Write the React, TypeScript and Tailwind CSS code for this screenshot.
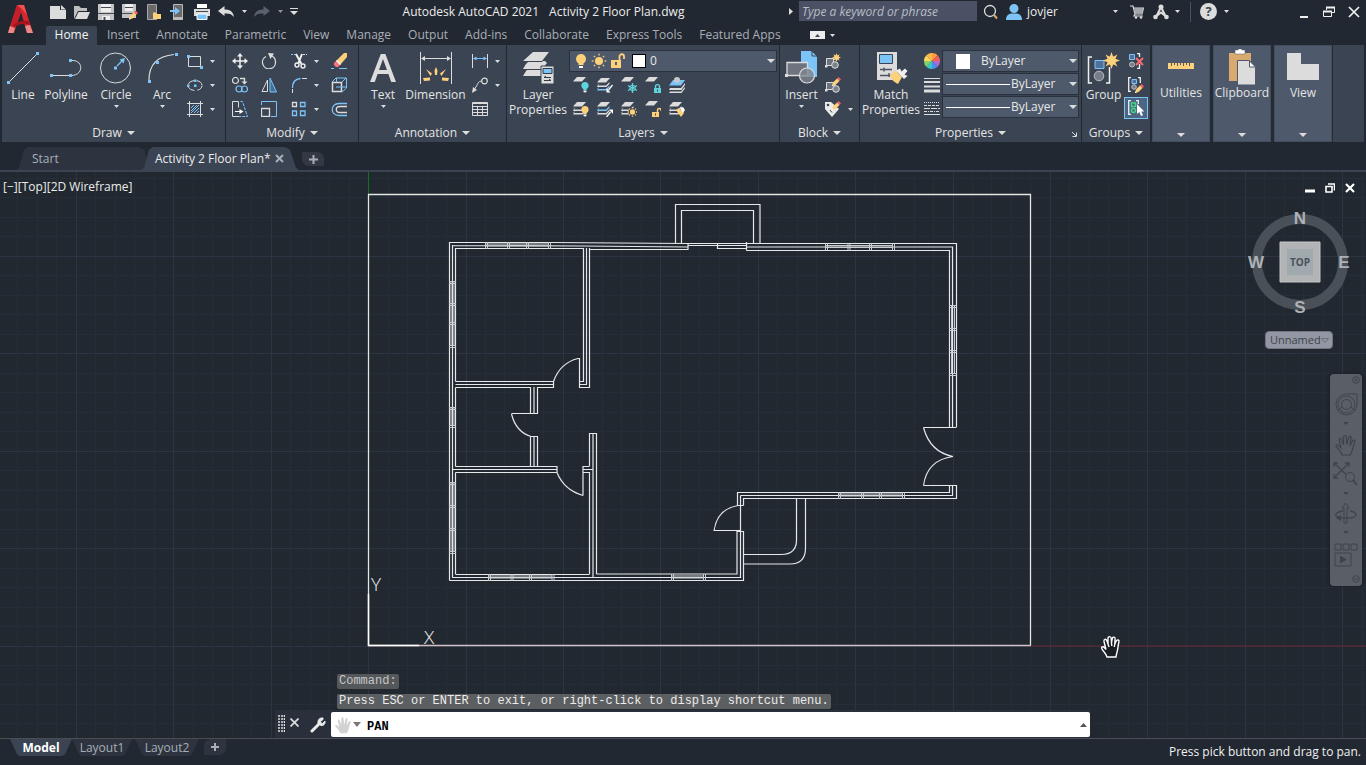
import React from "react";

const W = "#dcdcdc";
const B = "#7cc4f8";
const Y = "#fdd07a";

type SvgProps = { w?: number; h?: number; vb?: string; className?: string; children: React.ReactNode };

function Svg({ w = 16, h = 16, vb, className = "", children }: SvgProps) {
  return (
    <svg width={w} height={h} viewBox={vb ?? `0 0 ${w} ${h}`} fill="none" aria-hidden="true" className={`shrink-0 ${className}`}>
      {children}
    </svg>
  );
}

function Caret({ big = false, className = "" }: { big?: boolean; className?: string }) {
  return big ? (
    <Svg w={8} h={4} className={className}><path d="M0 0h8L4 4z" fill={W} /></Svg>
  ) : (
    <Svg w={5} h={3} className={className}><path d="M0 0h5L2.500 3z" fill={W} /></Svg>
  );
}

/* ---------- Shared icon parts ---------- */

const Pencil = ({ x = 0, y = 0 }: { x?: number; y?: number }) => (
  <g transform={`translate(${x} ${y})`}>
    <path d="M0 9l1-3.500L5 1.600l2.500 2.500L3.500 8z" fill={Y} />
    <path d="M5 1.600L6.600 0l2.500 2.500-1.600 1.600z" fill="#f4606a" />
    <path d="M0 9l.5-1.800L1.800 8.500z" fill="#fff" />
  </g>
);

const Sheet = ({ y = 0, c = W }: { y?: number; c?: string }) => <path d={`M4 ${y}h9l-4 4.500H0z`} fill={c} />;

const Stack = ({ mid = W, low = W }: { mid?: string; low?: string }) => (
  <g>
    <Sheet y={1} />
    <path d="M2.500 6L0 8.500h9L12.500 5v1.800L9.500 10H0" fill={mid} />
    <path d="M2.500 9.500L0 12h9l3.500-3.500v1.800L9.500 13.500H0" fill={low} />
  </g>
);

const Burst = ({ x, y, r }: { x: number; y: number; r: number }) => (
  <g transform={`translate(${x} ${y}) scale(${r})`} fill={Y}>
    <path d="M0-1L.2-.45.7-.7.45-.2 1 0 .45.200.7.700.2.450 0 1-.2.450-.7.700-.45.200-1 0-.45-.2-.7-.7-.2-.45z" />
    <circle r=".5" />
  </g>
);

const Sun = ({ x, y, r }: { x: number; y: number; r: number }) => (
  <g stroke={Y} strokeWidth="1.300">
    <circle cx={x} cy={y} r={r * 0.55} fill={Y} stroke="none" />
    {[0, 45, 90, 135, 180, 225, 270, 315].map((a) => (
      <path key={a} d={`M${x} ${y - r * 0.75}V${y - r}`} transform={`rotate(${a} ${x} ${y})`} />
    ))}
  </g>
);

const Lock = ({ x, y, c, open = false }: { x: number; y: number; c: string; open?: boolean }) => (
  <g transform={`translate(${x} ${y})`}>
    <path d="M0 4h7v5H0z" fill={c} />
    <path d={open ? "M5.500 4V2c0-2 3.500-2 3.500 0v1" : "M1.500 4V2.500c0-2.500 4-2.500 4 0V4"} stroke={c} strokeWidth="1.400" />
    <path d="M3 5.500h1v2H3z" fill="#3b4453" />
  </g>
);

const Bulb = ({ x, y, c }: { x: number; y: number; c: string }) => (
  <g transform={`translate(${x} ${y})`}>
    <circle cx="4" cy="4" r="3.600" fill={c} />
    <path d="M2.300 6h3.400v2.500H2.300z" fill={c} />
    <path d="M2.500 9h3v1.500L4 11l-1.500-.5z" fill="#fff" />
  </g>
);

const HandShape = () => (
  <path
    d="M7 21C6 17 3 15 1.200 12.600c-.9-1.400.8-2.300 2-1.200L6 13.800 4.200 6c-.4-1.900 1.800-2.400 2.400-.6l1.900 5.500L8.500 3c0-2 2.500-2 2.700 0l.7 7.600 1.800-7c.5-1.900 2.700-1.400 2.400.5L15 11.600l2.600-4.700c.9-1.600 2.800-.7 2.200.9-1.300 3.800-1.900 5.500-2.500 8-.5 2.200-1.300 3.700-2 5.200z"
  />
);

/* ---------- Large icons ---------- */

const big = {
  line: <Svg w={32} h={32}><path d="M3 29L29 3" stroke={W} /><path d="M0 29h3v3H0zM29 0h3v3h-3z" fill={B} /></Svg>,
  polyline: <Svg w={34} h={32}><path d="M3 23.500h18M22 8.500c13-1 13 15 0 15" stroke={W} /><path d="M1 22h3v3H1zM20 22h3v3h-3zM20 7h3v3h-3z" fill={B} /></Svg>,
  circle: <Svg w={32} h={32}><circle cx="15.500" cy="16" r="15" stroke={W} /><path d="M17 14l6-6" stroke={B} strokeWidth="1.200" /><path d="M25 6l-1.500 5.500L19.500 7.500z" fill={B} /><path d="M14 14.500h3v3h-3z" fill={B} /></Svg>,
  arc: <Svg w={32} h={32}><path d="M3 28C3 12 12 4 28 2.500" stroke={W} strokeWidth="1.200" /><path d="M2 28h3v3H2zM10 9h3v3h-3zM29 1h3v3h-3z" fill={B} /></Svg>,
  text: <Svg w={26} h={32}><path fill={W} fillRule="evenodd" d="M0 30L10.800 2h4.600L26 30h-4.800l-2.800-8H7.600l-2.800 8zM9 18h8L13 7z" /></Svg>,
  dimension: (
    <Svg w={34} h={32}>
      <path d="M1.500 0v32M32.500 0v32M3 6.500h28" stroke={W} />
      <path d="M2 6.500l4-2.500v5zM32 6.500L28 4v5z" fill={W} />
      <path d="M17 15l1.500 3.500L18 23h-2l-.5-4.500zM7 17l6 4.500-1.500 2.500zM27 17l-6 4.500 1.500 2.500zM4 26l7-.5v3L5 29zM30 26l-7-.5v3l6 .5z" fill={Y} />
    </Svg>
  ),
  layerProps: (
    <Svg w={34} h={32}>
      <path d="M12 0h16l-7 9H2zM5 12l3-3h16l2 2-5 6H2zM5 19l2-2h14v7H2z" fill={W} />
      <path d="M2 9.500h19.500M2 17.500h19" stroke="#3b4453" />
      <path d="M20 14h13v18H20z" fill={W} stroke="#3b4453" />
      <path d="M22 16.500h9v5h-9z" fill={B} stroke="#333b47" />
      <path d="M23 25.500h7M23 28.500h7M25 24l-2 1.500M28 27l2 1.500" stroke="#333b47" />
    </Svg>
  ),
  insert: (
    <Svg w={34} h={34} className="-mt-px">
      <path d="M16 0h10l6 6v20H16z" fill={B} /><path d="M27 0l5 5h-5z" fill={B} stroke="#3b4453" />
      <path d="M2 11.500h20.500V24.500H2z" fill="#6d737f" stroke={W} strokeWidth="1.300" />
      <circle cx="22" cy="24.500" r="7.500" fill="#80868f" fillOpacity=".8" stroke={W} strokeWidth="1.200" />
      <path d="M0 23h3v3H0z" fill={W} />
    </Svg>
  ),
  match: (
    <Svg w={34} h={32}>
      <path d="M3 0h20v28H3z" fill={W} /><path d="M5.500 2.500h13v9h-13z" fill={B} stroke="#3b4453" />
      <path d="M6 17.500h12M6 23.500h12M10 15.500v4M15 21v4" stroke="#4c5462" strokeWidth="1.400" />
      <path d="M16 23l6-4.500 6 6.500-4 7c-4-2-8-5-8-9z" fill={Y} /><path d="M22 18.500l4-2 1.500 3 3.500-3 2.500 2.500-3 3.500 3 1.500-3.500 3z" fill="#efefef" />
    </Svg>
  ),
  group: (
    <Svg w={34} h={32}>
      <path d="M5 5H1.500v26H5M19 31h3.500V15" stroke="#efefef" strokeWidth="1.500" />
      <path d="M8 8.500h9v8H8z" fill="#50729a" stroke={B} /><circle cx="12" cy="24" r="4.800" fill="#787e89" stroke="#b9bcc2" />
      <Burst x={24.500} y={8.500} r={8.500} />
    </Svg>
  ),
  ruler: <Svg w={30} h={32}><path d="M2 12h26v6H2z" fill={Y} /><path d="M5.500 12v3M8.500 12v2M11.500 12v3M14.500 12v2M17.500 12v3M20.500 12v2M23.500 12v3" stroke="#4e596b" /></Svg>,
  clipboard: <Svg w={28} h={37}><path d="M1 4h22v28H1z" fill="#d8aa70" /><path d="M7 1h3V0h4v1h3v4H7z" fill="#fff" stroke="#4e596b" strokeWidth=".5" /><path d="M9.500 11.500h12l6 6V36h-18z" fill={W} stroke="#4e596b" /><path d="M21.500 12v6h6z" fill="#fff" stroke="#4e596b" /></Svg>,
  view: <Svg w={32} h={28}><path d="M0 0h14v11h18v16H0z" fill={W} /></Svg>,
};

/* ---------- Small icons ---------- */

const small = {
  rect: <Svg><path d="M1.500 3.500h12v10h-12z" stroke={W} /><path d="M0 2h3v3H0zM13 13h3v3h-3z" fill={B} /></Svg>,
  ellipse: <Svg><ellipse cx="8" cy="8.500" rx="7" ry="5" stroke={W} strokeDasharray="7 3" /><path d="M7 2.500h2.500V5H7zM7 7.500h2.500V10H7zM0 7.500h2.500V10H0z" fill={B} /></Svg>,
  hatch: <Svg><path d="M2.500 0v16M13.500 0v16M0 2.500h16M0 13.500h16" stroke={W} /><path d="M4 7l3-3M4 10l6-6M4 12l8-8M7 12l5-5M10 12l2-2" stroke={B} /></Svg>,
  move: <Svg><path d="M8 2v12M2 8h12" stroke="#efefef" strokeWidth="1.500" /><path d="M8 0l3 3.500H5zM8 16l3-3.500H5zM0 8l3.500-3v6zM16 8l-3.500-3v6z" fill="#efefef" /></Svg>,
  rotate: <Svg><path d="M5 3.500A6.500 6.500 0 1 0 14.500 9c0-3-1.500-5-3.500-6" stroke={W} strokeWidth="1.300" /><path d="M7 0l6 .5L9.500 6z" fill={W} /></Svg>,
  trim: <Svg><path d="M0 1.500h5" stroke={B} strokeDasharray="2 1" /><path d="M12 1.500h4" stroke={W} strokeDasharray="2 1" /><path d="M5 1l5.500 10M11 1L7 11" stroke="#efefef" strokeWidth="2" /><circle cx="6" cy="12" r="2" stroke="#efefef" strokeWidth="1.400" /><circle cx="12" cy="13" r="2" stroke="#efefef" strokeWidth="1.400" /></Svg>,
  erase: <Svg><path d="M5 8L13 0h3v4l-7 8z" fill={Y} /><path d="M3 10l2.500-2.500 4 4L7 14c-2 1-5-2-4-4z" fill="#f4747a" /><path d="M5 8l4 4 1-1-4-4z" fill="#fff" /><path d="M0 15.500h3M8 15.500h8" stroke={B} /></Svg>,
  copy: <Svg><circle cx="3.500" cy="3.500" r="3" stroke={W} strokeWidth="1.200" /><circle cx="7" cy="12" r="3" stroke={B} strokeWidth="1.200" /><circle cx="12.500" cy="12" r="3" stroke={B} strokeWidth="1.200" /><path d="M8 1.500h4.500V5" stroke={W} strokeWidth="1.400" /><path d="M9.500 4.500h6L12.500 7.500z" fill={W} /></Svg>,
  mirror: <Svg><path d="M6.500 3v11.500H1z" stroke={W} /><path d="M9 1v14h6.500z" fill="#3f7099" stroke={B} /></Svg>,
  fillet: <Svg><path d="M1.500 11c0-6 3-9 8-9.500" stroke={B} strokeWidth="1.300" /><path d="M11 1.500h5M1.500 12v4" stroke={W} /></Svg>,
  box: <Svg><path d="M1.500 5.500h9v9h-9z" stroke={W} strokeWidth="1.500" /><path d="M1 5l4-4h10.500v10L11 15M11 5l4-4M5.500 1v4M5 10h10" stroke={B} /></Svg>,
  stretch: <Svg><path d="M7 15.500H.5V.5h6v6" stroke={W} /><path d="M8.500.5h2L15.500 15.500H7" stroke={B} strokeDasharray="3 1" /><path d="M3 10.500h6" stroke="#fff" /><path d="M7.500 8l4 2.500-4 2.500z" fill="#fff" /></Svg>,
  scale: <Svg><path d="M.5 4V.5h15v15H10" stroke={B} /><path d="M.5 7.500h8v8h-8z" stroke={W} strokeWidth="1.300" /></Svg>,
  array: <Svg><path d="M1.500 1.500h4v4h-4z" stroke={W} strokeWidth="1.300" /><path d="M9.500 1.500h4.500v4H9.500zM1.500 10h4v4.500h-4zM9.500 10h4.500v4.500H9.500z" stroke={B} strokeWidth="1.300" /></Svg>,
  offset: <Svg><path d="M16 2.500H8c-9 0-9 12 0 12h8" stroke={B} strokeWidth="1.300" /><path d="M16 5.500H9c-5 0-5 6 0 6h7" stroke={W} strokeWidth="1.300" /></Svg>,
  linear: <Svg><path d="M.5 1v14M15.500 1v14" stroke={W} /><path d="M3 5.500h10" stroke={B} /><path d="M1 5.500l3.500-2v4zM15 5.500l-3.500-2v4z" fill={B} /></Svg>,
  leader: <Svg><circle cx="12.500" cy="4" r="2.800" stroke={W} strokeWidth="1.200" /><path d="M9.500 4C6 4 6 7 4.500 9L2 13" stroke={W} /><path d="M0 16l1-6 4 3z" fill={W} /></Svg>,
  table: <Svg><path d="M.5 1.500h15v13H.5zM1 2.500h14M1 5.500h14M1 8.500h14M1 11.500h14M5.500 5v10M10.500 5v10" stroke={W} /></Svg>,
  blockNew: <Svg><path d="M1.500 5.500h7v7h-7z" stroke={W} fill="#6d737f" /><circle cx="10" cy="12" r="3.300" fill="#7c828c" stroke={W} /><path d="M0 12h2.500v2.500H0z" fill={W} /><Burst x={11.500} y={4.500} r={4.500} /></Svg>,
  blockEdit: <Svg><path d="M1.500 5.500h8v7h-8z" stroke={W} fill="#6d737f" /><circle cx="11" cy="12" r="3.300" fill="#7c828c" stroke={W} /><path d="M0 12h2.500v2.500H0z" fill={W} /><Pencil x={7} /></Svg>,
  attribute: <Svg><path d="M0 1h6l8 7-7 8-7-8z" fill="#eaeaea" /><circle cx="3" cy="4" r="1.300" fill="#3b4453" /><path d="M5 9l2 2.500" stroke="#3b4453" /><Pencil x={7} /></Svg>,
  weights: <Svg><path d="M0 1.500h16" stroke={W} /><path d="M0 5h16M0 9.500h16" stroke={W} strokeWidth="2" /><path d="M0 14h16" stroke={W} strokeWidth="3" /></Svg>,
  linetypes: <Svg><path d="M0 1.500h16" stroke={W} strokeDasharray="1 1" /><path d="M0 4.500h16" stroke={W} strokeDasharray="3 1" /><path d="M0 7.500h16" stroke={W} strokeDasharray="6 1" /><path d="M0 10.500h16" stroke={W} strokeDasharray="3 1 1 1" /><path d="M0 13.500h16" stroke={W} /></Svg>,
  ungroup: <Svg><path d="M1.500 1.500h5v5h-5z" fill="#50729a" stroke={B} /><circle cx="4" cy="11.500" r="2.500" fill="#787e89" stroke="#b9bcc2" /><path d="M9 .7h2.500V4M11.500 11v4.300H9" stroke="#efefef" strokeWidth="1.300" /><path d="M8 5l7 7M15 5l-7 7" stroke="#ff6b70" strokeWidth="1.900" /></Svg>,
  groupEdit: <Svg><path d="M3 .7H.7v13.600H3M10 .7h2.300V6" stroke="#efefef" strokeWidth="1.300" /><path d="M4 2.500h4.500v4H4z" fill="#50729a" stroke={B} /><circle cx="6" cy="10" r="2.300" fill="#787e89" stroke="#b9bcc2" /><Pencil x={7} y={7} /></Svg>,
  groupSelect: <Svg><path d="M3 .7H.7v13.600H3M8 .7h2.300V4" stroke="#efefef" strokeWidth="1.300" /><path d="M3.500 3h4v3.500h-4z" stroke="#46d38a" strokeWidth="1.500" /><circle cx="5.500" cy="10.500" r="2" stroke="#46d38a" strokeWidth="1.500" /><path d="M9 4v10l2.300-2 1.700 4 2-.8-1.700-3.700h3z" fill="#fff" /></Svg>,
  wheel: (
    <Svg>
      {["#ff9b3c", "#ef6159", "#b56ad0", "#4b8df0", "#3cc8c0", "#7ed36b", "#ffd85a", "#ffb947"].map((c, i) => (
        <path key={c} d="M8 8V0A8 8 0 0 1 13.700 2.300z" fill={c} transform={`rotate(${i * 45} 8 8)`} />
      ))}
    </Svg>
  ),
};

const layerTools: [string, React.ReactNode][] = [
  ["Layer off", <Svg key="a"><Sheet y={0} /><Bulb x={8} y={4.500} c="#5fd4dc" /></Svg>],
  ["Layer isolate", <Svg key="b"><Stack low={B} /><path d="M15.500 8l-4 5" stroke="#fff" strokeWidth="1.300" /><path d="M9.500 15.500V11l4 4.500z" fill="#fff" /></Svg>],
  ["Layer freeze", <Svg key="c"><Sheet y={0} /><path d="M11.500 6v10M7 8.500l9 5M7 13.500l9-5" stroke="#5fd4dc" strokeWidth="1.300" /><circle cx="11.500" cy="11" r="2.800" stroke="#5fd4dc" /></Svg>],
  ["Layer lock", <Svg key="d"><Sheet y={0} /><Lock x={9} y={7} c="#5fd4dc" /></Svg>],
  ["Make current", <Svg key="e"><path d="M4 3h12l-4 5.500H0z" fill={B} /><path d="M1 11h11l4-5v2l-3.500 5H0zM1 14.500h11l4-4.500v1.500L12.500 16H0z" fill={W} /><circle cx="8" cy="3" r="3" fill="#c9c9c9" /></Svg>],
  ["Turn all on", <Svg key="f"><Stack /><Bulb x={8} y={4.500} c={Y} /></Svg>],
  ["Unisolate", <Svg key="g"><Stack mid={B} /><path d="M9.500 16l4-5" stroke="#fff" strokeWidth="1.300" /><path d="M16 8.500V13l-4-4.500z" fill="#fff" /></Svg>],
  ["Thaw all", <Svg key="h"><Stack /><circle cx="11.500" cy="11" r="4" fill="#3b4453" /><Sun x={11.500} y={11} r={4.800} /></Svg>],
  ["Unlock", <Svg key="i"><Sheet y={0} /><Lock x={7} y={7} c={Y} open /></Svg>],
  ["Match layer", <Svg key="j"><Stack /><path d="M7 9l3-2 5 5-3 4z" fill={Y} /><path d="M11 7l3-1 2 3-2 3z" fill="#fff" /></Svg>],
];

/* ---------- Ribbon building blocks ---------- */

function BigButton({ icon, label, caret, className }: { icon: React.ReactNode; label: React.ReactNode; caret?: boolean; className: string }) {
  return (
    <button type="button" className={`flex shrink-0 flex-col items-center pt-[7px] text-[12px] leading-[15px] text-[#e4e4e4] ${className}`}>
      <span className="flex h-[35px] items-start justify-center">{icon}</span>
      <span className="whitespace-nowrap text-center">{label}</span>
      {caret && <Caret className="mt-[3px]" />}
    </button>
  );
}

function Tool({ label, icon, caret }: { label: string; icon: React.ReactNode; caret?: boolean }) {
  return (
    <button type="button" aria-label={label} className="flex h-[24px] items-center gap-[7px]">
      {icon}
      {caret && <Caret />}
    </button>
  );
}

function Panel({ title, className, launcher, children }: { title: string; className: string; launcher?: boolean; children: React.ReactNode }) {
  return (
    <section className={`flex shrink-0 flex-col bg-[#3b4453] ${className}`}>
      <div className="flex h-[79px]">{children}</div>
      <button type="button" className="relative flex h-[18px] items-center justify-center gap-[5px] text-[12px] leading-[18px] text-[#e4e4e4]">
        {title}
        <Caret big />
        {launcher && (
          <Svg w={6} h={6} className="absolute right-[4px] bottom-[5px]"><path d="M1 1l4 4M5.500 1.500v4h-4" stroke={W} /></Svg>
        )}
      </button>
    </section>
  );
}

function CollapsedPanel({ title, icon }: { title: string; icon: React.ReactNode }) {
  return (
    <button type="button" className="flex w-[58px] shrink-0 flex-col items-center border border-[#424d5e] bg-[#4e596b] text-[12px] leading-[15px] text-[#e4e4e4]">
      <span className="flex h-[39px] items-center pt-[3px]">{icon}</span>
      <span>{title}</span>
      <Caret big className="mt-auto mb-[4px]" />
    </button>
  );
}

function PropertySelect({ label, kind }: { label: string; kind: "swatch" | "line" }) {
  return (
    <div className="flex h-[22px] items-center border border-[#2a313c] bg-[#4e596b] pr-px">
      {kind === "swatch" ? <span className="mr-[11px] ml-[13px] h-[15px] w-[14px] bg-white" /> : <span className="mr-px ml-[3px] h-px w-[64px] bg-white" />}
      <select aria-label={label} className="min-w-0 flex-1 appearance-none bg-transparent text-[12px] leading-[18px] text-[#e8e8e8] outline-none">
        <option>ByLayer</option>
      </select>
      <Caret big className="pointer-events-none" />
    </div>
  );
}

function Ribbon() {
  return (
    <div className="flex h-[97px] shrink-0 gap-px px-[2px]">
      <Panel title="Draw" className="w-[223px]">
        <BigButton className="ml-[3px] w-[36px]" icon={big.line} label="Line" />
        <BigButton className="w-[50px]" icon={big.polyline} label="Polyline" />
        <BigButton className="w-[50px]" icon={big.circle} label="Circle" caret />
        <BigButton className="w-[42px]" icon={big.arc} label="Arc" caret />
        <div className="ml-[4px] flex flex-col pt-[4px]">
          <Tool label="Rectangle" icon={small.rect} caret />
          <Tool label="Ellipse" icon={small.ellipse} caret />
          <Tool label="Hatch" icon={small.hatch} caret />
        </div>
      </Panel>

      <Panel title="Modify" className="w-[132px]">
        <div className="ml-[6px] grid auto-rows-[24px] grid-cols-[29px_30px_40px_16px] pt-[4px]">
          <Tool label="Move" icon={small.move} />
          <Tool label="Rotate" icon={small.rotate} />
          <Tool label="Trim" icon={small.trim} caret />
          <Tool label="Erase" icon={small.erase} />
          <Tool label="Copy" icon={small.copy} />
          <Tool label="Mirror" icon={small.mirror} />
          <Tool label="Fillet" icon={small.fillet} caret />
          <Tool label="Explode" icon={small.box} />
          <Tool label="Stretch" icon={small.stretch} />
          <Tool label="Scale" icon={small.scale} />
          <Tool label="Array" icon={small.array} caret />
          <Tool label="Offset" icon={small.offset} />
        </div>
      </Panel>

      <Panel title="Annotation" className="w-[147px]">
        <BigButton className="ml-[2px] w-[44px]" icon={big.text} label="Text" caret />
        <BigButton className="w-[61px]" icon={big.dimension} label="Dimension" />
        <div className="ml-[6px] flex flex-col pt-[4px]">
          <Tool label="Linear" icon={small.linear} caret />
          <Tool label="Leader" icon={small.leader} caret />
          <Tool label="Table" icon={small.table} />
        </div>
      </Panel>

      <Panel title="Layers" className="w-[272px]">
        <BigButton className="ml-[3px] w-[56px]" icon={big.layerProps} label={<>Layer<br />Properties</>} />
        <div className="ml-[3px] flex flex-1 flex-col pt-[5px] pr-[2px]">
          <div className="flex h-[22px] items-center border border-[#2a313c] bg-[#4e596b] pr-[1px] pl-[5px]">
            <Svg w={12} h={16}><circle cx="6" cy="6" r="5" fill={Y} /><path d="M3.500 9h5v3h-5z" fill={Y} /><path d="M4 13h4v2H4z" fill="#fff" /></Svg>
            <Svg w={16} h={16} className="ml-[4px]"><Sun x={8} y={8} r={7.300} /></Svg>
            <Svg w={14} h={16} className="ml-[4px]"><path d="M0 7h10v8H0z" fill={Y} /><path d="M8.500 7V3.500c0-3 4.500-3 4.500 0V6" stroke={Y} strokeWidth="1.800" /><path d="M4 9h2v3H4z" fill="#4e596b" /></Svg>
            <span className="ml-[7px] h-[14px] w-[14px] border border-black bg-white" />
            <select aria-label="Current layer" className="ml-[4px] min-w-0 flex-1 appearance-none bg-transparent text-[12px] leading-[18px] text-[#e8e8e8] outline-none">
              <option>0</option>
            </select>
            <Caret big className="pointer-events-none" />
          </div>
          <div className="ml-[4px] grid w-[120px] auto-rows-[24px] grid-cols-5 pt-px">
            {layerTools.map(([name, icon]) => <Tool key={name} label={name} icon={icon} />)}
          </div>
        </div>
      </Panel>

      <Panel title="Block" className="w-[79px]">
        <BigButton className="ml-[1px] w-[41px]" icon={big.insert} label="Insert" caret />
        <div className="ml-[3px] flex flex-col pt-[4px]">
          <Tool label="Create block" icon={small.blockNew} />
          <Tool label="Edit block" icon={small.blockEdit} />
          <Tool label="Edit attributes" icon={small.attribute} caret />
        </div>
      </Panel>

      <Panel title="Properties" className="w-[221px]" launcher>
        <BigButton className="ml-[3px] w-[56px]" icon={big.match} label={<>Match<br />Properties</>} />
        <div className="ml-[5px] flex flex-col pt-[4px]">
          <Tool label="Object color" icon={small.wheel} />
          <Tool label="Lineweight" icon={small.weights} />
          <Tool label="Linetype" icon={small.linetypes} />
        </div>
        <div className="ml-[2px] flex flex-1 flex-col gap-px pt-[5px] pr-[2px]">
          <PropertySelect label="Color" kind="swatch" />
          <PropertySelect label="Lineweight" kind="line" />
          <PropertySelect label="Linetype" kind="line" />
        </div>
      </Panel>

      <Panel title="Groups" className="w-[68px]">
        <BigButton className="ml-[2px] w-[39px]" icon={big.group} label="Group" />
        <div className="ml-[1px] flex flex-col items-center pt-[4px]">
          <Tool label="Ungroup" icon={small.ungroup} />
          <Tool label="Edit group" icon={small.groupEdit} />
          <button type="button" aria-label="Group selection" aria-pressed="true" className="flex h-[22px] w-[24px] items-center justify-center border border-[#7cc4f8] bg-[#4c6583]">
            {small.groupSelect}
          </button>
        </div>
      </Panel>

      <div className="flex min-w-0 flex-1 gap-[3px] bg-[#252b35] pl-px">
        <CollapsedPanel title="Utilities" icon={big.ruler} />
        <CollapsedPanel title="Clipboard" icon={big.clipboard} />
        <CollapsedPanel title="View" icon={big.view} />
        <div className="-ml-[2px] flex-1 bg-[#3b4453]" />
      </div>
    </div>
  );
}

/* ---------- Title bar and tabs ---------- */

const quickTools: [string, React.ReactNode][] = [
  ["New", <Svg key="n"><path d="M0 2h10v4h6v9H0z" fill={W} /><path d="M11 1l5 4.500h-5z" fill={W} /></Svg>],
  ["Open", <Svg key="o"><path d="M0 15V2h5l2 2h6v3H4z" fill="#bfbfbf" /><path d="M4.500 8H16l-3 7H1z" fill={W} /></Svg>],
  ["Save", <Svg key="s"><path d="M0 0h16v16H0z" fill="#c4c4c4" /><path d="M3 0h10v8H3z" fill="#eee" /><path d="M3 3.500h10M0 9.500h16" stroke="#444b57" /><path d="M4 12h8v4H4z" fill="#eee" /><path d="M5.500 13h2v3h-2z" fill="#444b57" /></Svg>],
  ["Save As", <Svg key="sa"><path d="M0 0h14v14H0z" fill="#c4c4c4" /><path d="M3 0h8v7H3z" fill="#eee" /><path d="M3 3.500h8M0 9.500h14" stroke="#444b57" /><Pencil x={7} y={6.500} /></Svg>],
  ["Open from Mobile", <Svg key="om"><path d="M1.500.5h9v15h-9z" fill="#6a6a6a" stroke="#aaa" /><path d="M7 15V8.500h3L11 10h4v5z" fill={Y} /></Svg>],
  ["Save to Mobile", <Svg key="sm"><path d="M3.500.5h9v15h-9z" fill="#6a6a6a" stroke="#bbb" /><path d="M3 13h10v3H3z" fill="#bbb" /><path d="M0 6h5V3l5 4-5 4V8H0z" fill={B} /></Svg>],
  ["Plot", <Svg key="p"><path d="M3 0h10v4H3z" fill="#fff" /><path d="M0 5h16v7H0z" fill={W} /><path d="M2 7.500h12" stroke="#444b57" /><path d="M3 10h10v5.500H3z" fill={B} stroke="#fff" /></Svg>],
];

const Arrow = ({ flip = false }: { flip?: boolean }) => (
  <Svg className={flip ? "-scale-x-100" : ""}>
    <path d="M0 7l6.500-5v3.500C12 5 15.500 8 16 13c-2.500-3-5-4-9.500-3.500V12z" fill={flip ? "#59616d" : W} />
  </Svg>
);

function TitleBar() {
  return (
    <div className="flex h-[24px] items-center pb-px text-[12px] text-[#ececec]">
      {quickTools.map(([name, icon]) => (
        <button key={name} type="button" aria-label={name} className="flex h-[22px] w-[24px] shrink-0 items-center justify-center">{icon}</button>
      ))}
      <button type="button" aria-label="Undo" className="flex h-[22px] w-[24px] shrink-0 items-center justify-center"><Arrow /></button>
      <button type="button" aria-label="Undo list" className="flex w-[12px] shrink-0 justify-center"><Caret /></button>
      <button type="button" aria-label="Redo" className="flex h-[22px] w-[24px] shrink-0 items-center justify-center"><Arrow flip /></button>
      <button type="button" aria-label="Redo list" className="flex w-[12px] shrink-0 justify-center opacity-60"><Caret /></button>
      <button type="button" aria-label="Customize" className="flex w-[16px] shrink-0 justify-center"><Svg w={8} h={7}><path d="M0 .5h8" stroke={W} /><path d="M0 3h8L4 7z" fill={W} /></Svg></button>
      <h1 className="flex flex-1 justify-center gap-[10px] whitespace-nowrap pr-[4px] font-normal">
        <span>Autodesk AutoCAD 2021</span>
        <span>Activity 2 Floor Plan.dwg</span>
      </h1>
      <Svg w={4} h={7} className="mr-[6px]"><path d="M0 0l4 3.500L0 7z" fill={W} /></Svg>
      <input aria-label="Search" placeholder="Type a keyword or phrase" className="mb-px h-[20px] w-[178px] shrink-0 bg-[#4a5164] px-[3px] text-[12px] italic outline-none placeholder:text-[#b9bdc6]" />
      <button type="button" aria-label="Find" className="flex w-[28px] shrink-0 justify-center"><Svg><circle cx="7" cy="7" r="5.500" stroke={W} strokeWidth="1.300" /><path d="M11 11l3 3.500" stroke="#d8aa70" strokeWidth="2" /></Svg></button>
      <button type="button" className="flex w-[113px] shrink-0 items-center gap-[5px] pl-px">
        <Svg w={16} h={16}><circle cx="8" cy="4.500" r="4.500" fill={B} /><path d="M0 16c0-5 3-6 5-6.500h6c2 .5 5 1.500 5 6.500z" fill={B} /></Svg>
        jovjer
        <Caret className="ml-auto" />
      </button>
      <button type="button" aria-label="App store" className="ml-[12px] shrink-0"><Svg w={14} h={14}><path d="M0 1h3l2 8h7l1.500-6H4M5 9l-1 2h9" stroke={W} strokeWidth="1.200" /><path d="M4 3h9.500L12 8.500H5z" fill="#a5a8ae" /><circle cx="6" cy="12.500" r="1.300" fill={W} /><circle cx="11" cy="12.500" r="1.300" fill={W} /></Svg></button>
      <button type="button" aria-label="Autodesk app" className="ml-[9px] flex shrink-0 items-center gap-[6px]"><Svg><path d="M8 3L3 13M8 3l5 10M3 12.500l5-4 5 4" stroke={W} strokeWidth="2" /><circle cx="8" cy="3" r="2.500" fill={W} /><circle cx="2.500" cy="13" r="2.300" fill={W} /><circle cx="13.500" cy="13" r="2.300" fill={W} /></Svg><Caret /></button>
      <span className="ml-[10px] h-[20px] w-px bg-[#4a5164]" />
      <button type="button" aria-label="Help" className="ml-[9px] flex shrink-0 items-center gap-[7px]"><span className="flex size-[17px] items-center justify-center rounded-full bg-[#dcdcdc] text-[13px] font-bold text-[#3b4453]">?</span><Caret /></button>
      <button type="button" aria-label="Minimize" className="ml-[70px] shrink-0"><Svg w={10} h={12}><path d="M1 11h8" stroke="#efefef" strokeWidth="2" /></Svg></button>
      <button type="button" aria-label="Restore" className="ml-[14px] shrink-0"><Svg w={12} h={12}><path d="M3.500 4V1.500h8v5H9M.5 5.500h8v5h-8z" stroke="#efefef" /><path d="M3 1.500h9M0 5.500h9" stroke="#efefef" strokeWidth="2" /></Svg></button>
      <button type="button" aria-label="Close" className="mr-[6px] ml-[13px] shrink-0"><Svg w={12} h={12}><path d="M1 1l10 10M11 1L1 11" stroke="#efefef" strokeWidth="1.700" /></Svg></button>
    </div>
  );
}

const ribbonTabs = ["Insert", "Annotate", "Parametric", "View", "Manage", "Output", "Add-ins", "Collaborate", "Express Tools", "Featured Apps"];

function Header() {
  return (
    <header className="flex h-[45px] shrink-0">
      <button type="button" aria-label="Application menu" className="flex w-[46px] shrink-0 justify-center pt-[5px] pr-[5px]">
        <Svg w={26} h={30}>
          <path d="M9 0h7l9 28h-6L13 7 6 28H0z" fill="#d8262d" />
          <path d="M9 0h5L6 28H0z" fill="#c41f28" />
          <path d="M6 19c5-3 10-4 15-3l1 4c-6-2-12-1-17 3z" fill="#a8141e" />
          <path d="M0 28l2-7 5 2-1.500 5zM19 28l-2-7 5-1 3 8z" fill="#e88a86" />
          <path d="M9 0h7l3 10-5-6z" fill="#ee5257" />
        </Svg>
      </button>
      <div className="min-w-0 flex-1">
        <TitleBar />
        <nav className="flex h-[21px] items-end text-[12px] leading-[18px] text-[#a9aeb7]">
          <a href="#home" className="mr-px w-[51px] shrink-0 rounded-t-[2px] bg-[#3b4453] pb-px text-center text-[#f4f4f4]">Home</a>
          {ribbonTabs.map((t) => <a key={t} href={`#${t}`} className="shrink-0 pr-[8px] pb-px pl-[9px]">{t}</a>)}
          <button type="button" aria-label="Minimize ribbon" className="mb-[6px] ml-[21px] flex items-center gap-[5px]">
            <span className="flex h-[8px] w-[15px] items-center justify-center bg-[#ececec]"><Svg w={5} h={3}><path d="M0 3h5L2.500 0z" fill="#3b4453" /></Svg></span>
            <Caret />
          </button>
        </nav>
      </div>
    </header>
  );
}

function FileTabs() {
  return (
    <div className="flex h-[30px] shrink-0 items-end border-b-2 border-[#3b4453] text-[12px] leading-[23px]">
      <a href="#start" className="ml-[16px] w-[134px] bg-[#2d3440] pl-[16px] text-[#a9aeb7] [clip-path:polygon(0_100%,3px_90%,8px_12%,12px_0,122px_0,128px_10%,100%_100%)]">Start</a>
      <div className="-ml-[9px] flex w-[158px] items-center bg-[#3b4453] pl-[14px] text-[#ececec] [clip-path:polygon(0_100%,3px_90%,8px_12%,12px_0,144px_0,149px_12%,155px_90%,100%_100%)]">
        <a href="#plan" className="whitespace-nowrap">Activity 2 Floor Plan*</a>
        <button type="button" aria-label="Close tab" className="ml-[4px]"><Svg w={9} h={9}><path d="M1 1l7 7M8 1L1 8" stroke="#a9aeb7" strokeWidth="2" /></Svg></button>
      </div>
      <button type="button" aria-label="New tab" className="mb-[4px] ml-[3px] flex h-[14px] w-[22px] items-center justify-center rounded-tr-[7px] rounded-bl-[7px] bg-[#323945]">
        <Svg w={9} h={9}><path d="M4.500 0v9M0 4.500h9" stroke="#a9aeb7" strokeWidth="2" /></Svg>
      </button>
    </div>
  );
}

/* ---------- Floor plan ---------- */

const walls = [
  /* terrace */
  "M675.500 243V204.500H760V243M681.500 243V210.500H753.500V243M675 243.500H760",
  /* top left */
  "M449.500 242.500H550L688 243.500M452.500 245.500L580 246L688 247M455.500 248.500H583.500M589.500 249.500H688V243",
  /* terrace door */
  "M688 245.500H717.500M717.500 243V248.500H746.500M717.500 245.500H746.500M746.500 242V250.500",
  /* top right */
  "M746.500 243.500H956.500V427M746.500 247H952.500V427M746.500 250.500H949.500V427",
  /* left */
  "M449.500 242V580.500M452.500 245V577.500M455.500 248V381.500M455.500 387.500V466.500M455.500 472.500V574",
  /* bedroom partition */
  "M583.500 248V381.500H580M586.500 248V384.500H580M589.500 248V387.500H579.500V358.500H578",
  "M455.500 381.500H553.500V387.500H537.500M455.500 384.500H553.500M455.500 387.500H530.500",
  /* bath */
  "M530.500 387V413.500M534 387V413.500M537.500 387V413.500H511.500M530.500 436.500H537.500V466.500M530.500 436.500V466M534 437V466",
  "M455.500 466.500H557V472.500M452.500 469.500H557M455.500 472.500H557M589.500 466.500H583V495.500M583 469.500H593M583 472.500H589.500",
  "M589.500 466V433.500H596.500V574M593 433V577.500M589.500 472V574",
  /* bottom */
  "M449.500 580.500H743.500V531.500H737V574H596.500M455.500 574.500H589.500M452.500 577.500H740.500V531M714 530.500H741",
  "M740.500 531V495.500M743.500 505.500V498.500H956.500V485.500H949.500V492.500H737.500V505.500H743.500M740.500 495.500H952.500V485.500M923.500 485.500H953M923.500 427.500H956.500",
  /* porch */
  "M796.500 499V540Q796.500 554.500 781 554.500H744M805.500 499V548Q805.500 564 790 564H744",
];

const swings = [
  "M578 358.500Q560 363 553.500 381.500",
  "M511.500 414Q516 432 531 436.500",
  "M557 472.500Q564 490 583 495.500",
  "M714 531Q717 509 738 505.500",
  "M923.500 427.500Q930 452 953 456.500Q927 460 923.500 485.500",
];

function windowH(y: number, xs: number[]) {
  return `M${xs[0]} ${y + 2}H${xs[xs.length - 1]}M${xs[0]} ${y + 4}H${xs[xs.length - 1]}` + xs.map((x) => `M${x} ${y}V${y + 7}M${x + 2} ${y}V${y + 7}`).join("");
}
function windowV(x: number, ys: number[]) {
  return `M${x + 2} ${ys[0]}V${ys[ys.length - 1]}M${x + 5} ${ys[0]}V${ys[ys.length - 1]}` + ys.map((y) => `M${x} ${y}H${x + 7}M${x} ${y + 2}H${x + 7}`).join("");
}

const windows = [
  windowH(242, [485.500, 507.500, 526.500, 548.500]),
  windowH(243.500, [825.500, 848, 869.500, 892.500]),
  windowH(492, [838.500, 861.500, 879.500, 902.500]),
  windowH(574, [488.500, 511, 529.500, 552]),
  windowH(574, [671.500, 703.500]),
  windowV(449, [281.500, 303.500, 322.500, 345.500]),
  windowV(449, [407.500, 425.500]),
  windowV(449, [482.500, 505.500, 528.500, 551.500]),
  windowV(949.500, [305.500, 328.500, 350.500, 373.500]),
];

const majorX = Array.from({ length: 18 }, (_, i) => Math.round(-21.500 + i * 97.400) + 0.500);
const majorY = Array.from({ length: 6 }, (_, i) => Math.round(158.500 + i * 97.400) + 0.500);
const minorX = Array.from({ length: 74 }, (_, i) => Math.round(-21.500 + i * 19.480) + 0.500);
const minorY = Array.from({ length: 31 }, (_, i) => Math.round(158.500 + i * 19.480) + 0.500);

function Drawing() {
  return (
    <svg className="absolute inset-0 size-full" viewBox="0 172 1366 566" preserveAspectRatio="xMinYMin slice" fill="none" role="img" aria-label="Floor plan drawing">
      <path d={minorX.map((x) => `M${x} 172V738`).join("") + minorY.map((y) => `M0 ${y}H1366`).join("")} stroke="#252d37" />
      <path d={majorX.map((x) => `M${x} 172V738`).join("") + majorY.map((y) => `M0 ${y}H1366`).join("")} stroke="#2d3443" />
      <path d="M368.500 172V194" stroke="#17701f" />
      <path d="M1031 646H1366" stroke="#6d2430" />
      <path d="M368.500 645.500V194.500H1030.500V645.500" stroke="#e4e6e2" strokeWidth="1.300" />
      <path d="M368 645.500H1031" stroke="#cfc1c5" strokeWidth="1.300" />
      <path d="M368.500 594V645.500H419" stroke="#fff" strokeWidth="1.500" />
      <g fill="#f0f0f0" fontFamily="Open Sans, sans-serif" fontSize="19" fontWeight="300" textAnchor="middle">
        <text x="376" y="591">Y</text>
        <text x="429" y="644">X</text>
      </g>
      <path d={walls.join("")} stroke="#e6e8ea" strokeWidth="1.200" />
      <path d={windows.join("")} stroke="#c9ccd0" />
      <path d={swings.join("")} stroke="#e4e6e8" strokeWidth="1.200" />
      <g transform="translate(1100 635)" fill="#1a1e24" stroke="#fff" strokeWidth="1.400">
        <path d="M7 22c-1-4-3.500-5-5-8-1.200-2 .8-3 2.500-1.200L6 14.500 4 6.500C3.500 4 6 3.500 6.700 5.500L8 9V3.500c0-2.500 3-2.500 3.200 0L11.500 8l.8-4.500c.4-2.200 3-1.700 2.800.5L14.800 9l1.500-3c1-2 3.200-1 2.600 1-.8 3-.9 5.500-1.500 8.500-.4 2.500-1.400 4.500-1.400 6.500z" />
        <path d="M8 9l1 3M11.500 8l.3 3M14.800 9l-.5 3" stroke="#fff" />
      </g>
    </svg>
  );
}

function ViewCube() {
  return (
    <div className="absolute top-[35px] right-[12px] flex w-[108px] flex-col items-center">
      <svg width="108" height="112" viewBox="1246 207 108 112" role="img" aria-label="View cube">
        <circle cx="1300" cy="262" r="43" stroke="#4a5058" strokeWidth="10" fill="none" />
        <path d="M1280 242h40v40h-40z" fill="#b1b3b4" stroke="#c4c5c6" />
        <path d="M1287 249h26v26h-26z" fill="#a0a9ae" />
        <g fill="#aeb2b7" fontFamily="Liberation Sans, Arial, sans-serif" fontWeight="bold" fontSize="17" textAnchor="middle">
          <text x="1300" y="224">N</text>
          <text x="1300" y="313">S</text>
          <text x="1256" y="268">W</text>
          <text x="1344" y="268">E</text>
        </g>
        <text x="1300" y="266" fill="#4b5058" fontFamily="Open Sans, sans-serif" fontWeight="bold" fontSize="10" textAnchor="middle">TOP</text>
      </svg>
      <button type="button" className="mt-[12px] mr-[2px] flex h-[18px] w-[68px] items-center justify-between rounded-[4px] border border-[#6f7582] bg-[#9397a3] px-[4px] text-[11px] text-[#3e434d]">
        Unnamed
        <Svg w={8} h={5}><path d="M.5.500h7L4 4.500z" stroke="#6b707c" /></Svg>
      </button>
    </div>
  );
}

function NavBar() {
  const s = "#3e444b";
  return (
    <div className="absolute top-[202px] right-[4px] flex w-[32px] flex-col items-center rounded-[4px] bg-[#5a5f65] pt-[2px] pb-[3px] shadow-[0_0_3px_#14181d]">
      <button type="button" aria-label="Close navigation bar" className="mr-[2px] self-end"><Svg w={8} h={8}><circle cx="4" cy="4" r="3.300" stroke={s} /><path d="M2.500 2.500l3 3M5.500 2.500l-3 3" stroke={s} /></Svg></button>
      <button type="button" aria-label="Steering wheel" className="mt-[9px] flex flex-col items-center gap-[6px]">
        <Svg w={23} h={23}><path d="M11.500 1H22v10.500A10.500 10.500 0 1 1 11.500 1z" stroke={s} /><circle cx="11.500" cy="11.500" r="8.500" stroke={s} /><circle cx="11.500" cy="11.500" r="5" stroke={s} /><path d="M3 17l4-3M20 17l-4-3" stroke={s} /></Svg>
        <Svg w={6} h={3}><path d="M0 0h6L3 3z" fill={s} /></Svg>
      </button>
      <button type="button" aria-label="Pan" className="mt-[9px]"><Svg w={22} h={23} vb="0 0 22 23"><g stroke={s} strokeWidth="1.200"><HandShape /></g></Svg></button>
      <button type="button" aria-label="Zoom" className="mt-[5px] flex flex-col items-center gap-[6px]">
        <Svg w={26} h={24}><path d="M1 1l16 15M16 1L1 16M1 5V1h4M12 1h4v4M1 12v4h4" stroke={s} strokeWidth="1.300" /><circle cx="17" cy="15" r="4.500" fill="#5a5f65" stroke={s} /><path d="M20 18l4 5" stroke={s} strokeWidth="2" /></Svg>
        <Svg w={6} h={3}><path d="M0 0h6L3 3z" fill={s} /></Svg>
      </button>
      <button type="button" aria-label="Orbit" className="mt-[7px] flex flex-col items-center gap-[7px]">
        <Svg w={24} h={22}><path d="M10 21V6H8l3.500-5L15 6h-2v15z" stroke={s} /><path d="M16 9c8 1 9 7-3 7-7 0-13-1-11-4 1-2 4-2.500 7-3" stroke={s} strokeWidth="1.300" /><path d="M2 16l5-3v6z" fill={s} /></Svg>
        <Svg w={6} h={3}><path d="M0 0h6L3 3z" fill={s} /></Svg>
      </button>
      <button type="button" aria-label="Show motion" className="mt-[9px]"><Svg w={24} h={24}><path d="M1 1h6v6H1zM9 1h6v6H9zM17 1h6v6h-6zM1 10h16v13H1z" stroke={s} /><path d="M6 12.500l7 4-7 4z" fill={s} /></Svg></button>
      <button type="button" aria-label="Navigation bar options" className="mt-[8px] mr-[2px] self-end"><Svg w={8} h={8}><circle cx="4" cy="4" r="3.300" stroke={s} /><path d="M2 4h4" stroke={s} /></Svg></button>
    </div>
  );
}

function CommandLine() {
  return (
    <div className="absolute bottom-0 left-[275px] w-[815px] font-['Liberation_Mono',monospace] text-[12px]">
      <div className="ml-[62px] flex flex-col items-start gap-[5px] pb-px leading-[15px]">
        <span className="rounded-[2px] bg-[#55585a] px-[2px] text-[#c4c6c8]">Command:</span>
        <span className="rounded-[2px] bg-[#5c5f61] px-[2px] whitespace-nowrap text-[#ececec]">Press ESC or ENTER to exit, or right-click to display shortcut menu.</span>
      </div>
      <div className="flex h-[28px] items-start bg-[#2a303b] pt-[2px]">
        <Svg w={7} h={18} className="mt-[3px] ml-[3px]"><path d="M1 0v18M4 0v18M6.500 0v18" stroke={W} strokeWidth="1.500" strokeDasharray="2 1" /></Svg>
        <button type="button" aria-label="Close command line" className="mt-[6px] ml-[5px]"><Svg w={9} h={9}><path d="M.5.500l8 8M8.500.500l-8 8" stroke={W} strokeWidth="1.700" /></Svg></button>
        <button type="button" aria-label="Command settings" className="mt-[5px] ml-[11px]"><Svg w={16} h={16}><path d="M2 14l7-7" stroke="#ececec" strokeWidth="3" strokeLinecap="round" /><path d="M13 2.500l-2.500 2 .5 1.500 1.500.5 2.500-2.500c.5 3-1.500 5-4 4.500L8 6.500C7.500 3 9.500.500 13 1z" fill="#ececec" stroke="#ececec" /></Svg></button>
        <label className="ml-[5px] flex h-[25px] min-w-0 flex-1 items-center rounded-[2px] bg-white px-[3px]">
          <Svg w={18} h={18} vb="0 0 21 22"><g fill="#d2d2d2"><HandShape /></g></Svg>
          <Svg w={8} h={5} className="ml-px"><path d="M0 0h8L4 5z" fill="#777" /></Svg>
          <input aria-label="Command" defaultValue="PAN" className="ml-[6px] min-w-0 flex-1 bg-transparent pt-[4px] font-bold text-black outline-none" />
          <Svg w={7} h={4}><path d="M0 4h7L3.500 0z" fill="#555" /></Svg>
        </label>
      </div>
    </div>
  );
}

function Canvas() {
  return (
    <main className="relative min-h-0 flex-1 overflow-hidden bg-[#212830]">
      <Drawing />
      <p className="absolute top-[6px] left-[3px] text-[12px] leading-[18px] text-[#ececec]">[−][Top][2D Wireframe]</p>
      <div className="absolute top-[11px] right-[11px] flex items-center gap-[10px]">
        <button type="button" aria-label="Minimize viewport"><Svg w={10} h={10}><path d="M0 8h10" stroke="#fff" strokeWidth="3" /></Svg></button>
        <button type="button" aria-label="Restore viewport"><Svg w={10} h={10}><path d="M3 1h6.500v6.500M1 3.500h6v5.500H1z" stroke="#fff" strokeWidth="1.600" /></Svg></button>
        <button type="button" aria-label="Close viewport"><Svg w={10} h={10}><path d="M1 1l8 8M9 1L1 9" stroke="#fff" strokeWidth="2.200" /></Svg></button>
      </div>
      <ViewCube />
      <NavBar />
      <CommandLine />
    </main>
  );
}

function StatusBar() {
  const shape = "[clip-path:polygon(0_0,100%_0,calc(100%-7px)_90%,calc(100%-10px)_100%,10px_100%,7px_90%)]";
  return (
    <footer className="flex h-[27px] shrink-0 items-start border-t border-[#4a4e54] text-[12px] leading-[17px] text-[#a9aeb7]">
      <a href="#model" className={`ml-[10px] w-[62px] bg-[#3b4453] text-center font-bold text-white ${shape}`}>Model</a>
      <a href="#layout1" className={`w-[60px] bg-[#2d3440] text-center ${shape}`}>Layout1</a>
      <a href="#layout2" className={`ml-[3px] w-[64px] bg-[#2d3440] text-center ${shape}`}>Layout2</a>
      <button type="button" aria-label="New layout" className="ml-[5px] flex h-[16px] w-[22px] items-center justify-center rounded-tl-[7px] rounded-br-[7px] bg-[#2d3440]">
        <Svg w={8} h={8}><path d="M4 0v8M0 4h8" stroke="#a9aeb7" strokeWidth="2" /></Svg>
      </button>
      <span className="mt-[4px] mr-[5px] ml-auto text-[#f0f0f0]">Press pick button and drag to pan.</span>
    </footer>
  );
}

export default function App() {
  return (
    <div className="flex h-screen flex-col overflow-hidden bg-[#222831] font-['Open_Sans',sans-serif]">
      <Header />
      <Ribbon />
      <FileTabs />
      <Canvas />
      <StatusBar />
    </div>
  );
}
